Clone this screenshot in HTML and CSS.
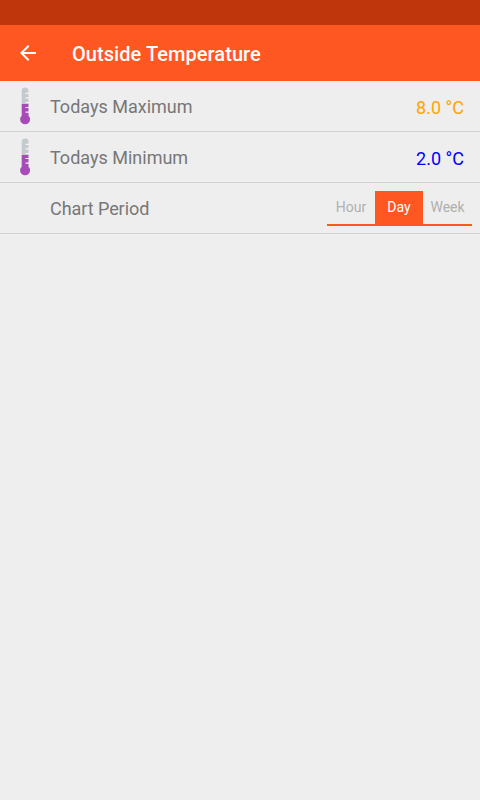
FILE: index.html
```
<!DOCTYPE html>
<html lang="en">
<head>
<meta charset="utf-8">
<title>Outside Temperature</title>
<link rel="stylesheet" href="styles.css">
</head>
<body>
<div class="status-bar"></div>
<header class="toolbar">
  <svg class="back" viewBox="0 0 24 24"><path d="M20 11H7.830l5.590-5.590L12 4l-8 8 8 8 1.410-1.410L7.830 13H20v-2z"/></svg>
  <h1 class="title">Outside Temperature</h1>
</header>
<main>
  <div class="row">
    <svg class="thermo" viewBox="0 0 50 50"><path class="tube" d="M21.700 23V9.800a3.400 3.400 0 0 1 6.800 0V23z"/><path class="fluid" d="M21.700 23h6.800v11.700a5 5 0 1 1-6.800 0z"/><path class="ticks" d="M25.500 12.300H29M25.500 16.800H29M25.500 21.500H29M25.500 26.500H29M25.500 31.200H29"/></svg>
    <span class="label">Todays Maximum</span><span class="value max">8.0 °C</span>
  </div>
  <div class="row">
    <svg class="thermo" viewBox="0 0 50 50"><path class="tube" d="M21.700 23V9.800a3.400 3.400 0 0 1 6.800 0V23z"/><path class="fluid" d="M21.700 23h6.800v11.700a5 5 0 1 1-6.800 0z"/><path class="ticks" d="M25.500 12.300H29M25.500 16.800H29M25.500 21.500H29M25.500 26.500H29M25.500 31.200H29"/></svg>
    <span class="label">Todays Minimum</span><span class="value min">2.0 °C</span>
  </div>
  <div class="row">
    <div class="thermo"></div>
    <span class="label period-label">Chart Period</span>
    <div class="periods"><span class="period">Hour</span><span class="period selected">Day</span><span class="period">Week</span></div>
  </div>
</main>
</body>
</html>
```
FILE: styles.css
```
body { margin: 0; background: #eee; font-family: Roboto, sans-serif; }
.status-bar { height: 25px; background: #bf360c; }
.toolbar { height: 56px; display: flex; align-items: center; background: #ff5722; color: #fff; }
.back { width: 24px; height: 24px; margin: 0 32px 0 16px; fill: #fff; }
.title { margin: 2px 0 0; font-size: 20px; font-weight: 500; letter-spacing: 0.06px; }
.row { height: 50px; display: flex; align-items: center; border-bottom: 1px solid #d2d2d2; }
.thermo { width: 50px; height: 50px; flex: none; }
.tube { fill: #c5cacd; }
.fluid { fill: #a64bb8; }
.ticks { stroke: #f6f2f7; stroke-width: 1.2; }
.label { flex: 1; font-size: 18px; color: #777; }
.period-label { letter-spacing: -0.06px; }
.value { font-size: 18px; padding: 2px 16px 0 0; }
.max { color: #ffa500; }
.min { color: #00f; }
.periods { display: grid; grid-template-columns: 48px 48px 49px; height: 33px; margin: 0 8px 0 0; border-bottom: 2px solid #ff5722; }
.period { text-align: center; font-size: 14px; line-height: 33px; color: #b0b0b0; }
.selected { background: #ff5722; color: #fff; }
```
